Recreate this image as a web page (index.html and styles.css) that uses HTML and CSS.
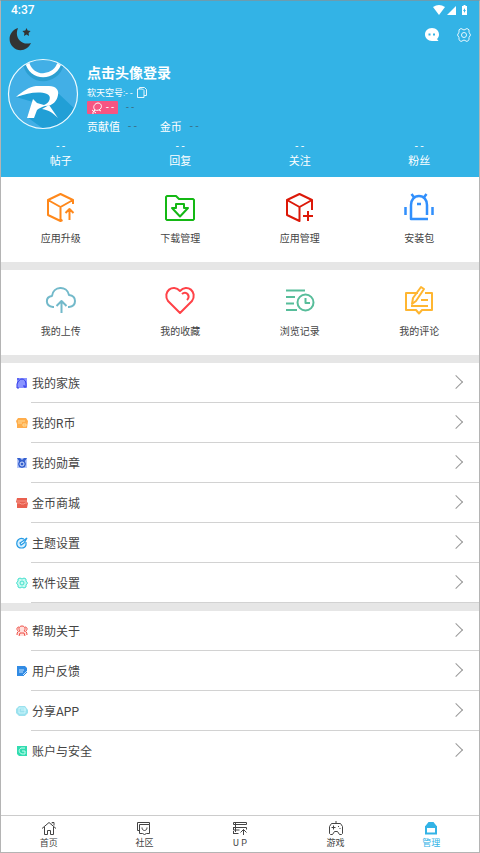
FILE: index.html
```html
<!DOCTYPE html>
<html lang="zh-CN">
<head>
<meta charset="utf-8">
<meta name="viewport" content="width=device-width, initial-scale=1">
<title>管理</title>
<link rel="stylesheet" href="styles.css">
</head>
<body>
<div class="app">
  <header class="header">
    <div class="status">
      <span>4:37</span>
      <svg width="36" height="12" viewBox="0 0 36 12" fill="#fff" aria-hidden="true">
        <path d="M0 3Q6-1 12 3L6 11Z"/><path d="M14 11H23V2Z"/>
        <path fill-rule="evenodd" d="M29 2h1.500V1h2v1H34v9h-5ZM32 4l-2 3h1v2l2-3h-1Z"/>
      </svg>
    </div>
    <div class="tools">
      <button class="icon-button" aria-label="夜间模式">
        <svg width="24" height="24" viewBox="0 0 24 24" fill="#333"><path d="M9 1C0 4-2 14 4 20s15 3 18-4C12 19 5 10 9 1Z"/><path d="m17.500 1 1.200 2.600 2.900.4-2 2 .4 3-2.500-1.400L15 9l.4-3-2-2 2.900-.4Z"/></svg>
      </button>
      <span class="tools-right">
        <button class="icon-button" aria-label="消息">
          <svg width="16" height="16" viewBox="0 0 16 16"><path d="M8 1C3.500 1 1 4 1 7.500S4 14 8 14h6.500L13 12c1.500-1.500 2-3 2-4.500C15 4 12.500 1 8 1Z" fill="#fff"/><path d="M4.500 6.500h2v2h-2zM9 6.500h2v2H9z" fill="#33b3e6"/></svg>
        </button>
        <button class="icon-button" aria-label="设置">
          <svg width="16" height="16" viewBox="0 0 16 16" fill="none" stroke="#e6f6fd"><path d="M5 1.500 8 3l3-1.500 2 1.300v2.400L14.500 8 13 10.500v2.300L11 14.500 8 13l-3 1.500-2-1.700v-2.300L1.500 8 3 5.200V2.800Z" stroke-linejoin="round"/><circle cx="8" cy="8" r="2.500"/></svg>
        </button>
      </span>
    </div>
    <div class="profile">
      <a class="avatar" href="#login" aria-label="登录">
        <svg width="72" height="72" viewBox="0 0 72 72">
          <defs><clipPath id="disc"><circle cx="36" cy="36" r="34"/></clipPath></defs>
          <g clip-path="url(#disc)">
            <circle cx="36" cy="36" r="35" fill="#42afe6"/>
            <path d="M9 39 41 29 52 36 71 54V72H38L20 59 26 44Z" fill="#219fd6"/>
            <path d="M19 6C23 25 49 25 54 6" fill="none" stroke="#2c9fd1" stroke-width="6"/>
            <path d="M20 3C23 22 49 22 53 3" fill="none" stroke="#fff" stroke-width="4"/>
          </g>
          <path d="M9 39C16 33 22 29 29 28h13c7 0 10 4 9 9-1 6-5 11-13 11-3 1-6 2-8 4l-3 8h-7l6-19 4 4 7 2c6-2 8-9 3-11-8-3-19-1-31 3Z" fill="#fff"/>
          <path d="M35 51 42 47 51 60C46 55 42 52 35 51Z" fill="#fff"/>
          <circle cx="36" cy="36" r="34.500" fill="none" stroke="#eefaff" stroke-width="1.200"/>
        </svg>
      </a>
      <div class="info">
        <h1>点击头像登录</h1>
        <div class="account"><span>软天空号:- -</span>
          <button class="icon-button" aria-label="复制"><svg width="12" height="12" viewBox="0 0 12 12" fill="none" stroke="#e6f6fd"><path d="M3.500 3V1.500h5l2 2v6H8M1.500 3h5L8 4.500v7H1.500Z"/></svg></button>
        </div>
        <div class="level"><span class="tag"><svg width="12" height="12" viewBox="0 0 12 12" fill="none" stroke="#fff"><path d="M4 8C1 5 4 1 7 1s4 3 3 5-4 3-6 2Zm0 0-2 2m-1-2 4 3M8 8l2 1M1 11h2"/></svg>- -</span><span class="dark">- -</span></div>
        <div class="points"><span>贡献值</span><span class="dark">- -</span><span class="coin">金币</span><span class="dark">- -</span></div>
      </div>
    </div>
    <div class="stats">
      <a href="#posts"><span>- -</span>帖子</a><a href="#replies"><span>- -</span>回复</a><a href="#following"><span>- -</span>关注</a><a href="#fans"><span>- -</span>粉丝</a>
    </div>
  </header>

  <main>
    <section class="grid">
      <a href="#upgrade"><svg class="tile orange" viewBox="0 0 32 32"><path d="M28 12V8L15.500 2 3 8v15l12.500 6 2-1M3 8l12.500 7L28 8M15.500 15v14M24.500 28V17m-4 4 4-4 4 4"/></svg>应用升级</a>
      <a href="#downloads"><svg class="tile green" viewBox="0 0 32 32"><path d="M3 4h9l3 3h14l1 1v19l-1 1H3l-1-1V5ZM12 12h8v4h4l-8 8.500L8 16h4Z"/></svg>下载管理</a>
      <a href="#apps"><svg class="tile red" viewBox="0 0 32 32"><path d="M28 18V8L15.500 2 3 8v15l12.500 6V15L3 8m12.500 7L28 8M19 24h10m-5-5v10"/></svg>应用管理</a>
      <a href="#packages"><svg class="tile blue" viewBox="0 0 32 32"><path d="M24 23V13c0-5-3-9-8-9s-8 4-8 9v14h17M8.500 2l3 4m12-4-3 4M2.500 15v8m27-8v8M14 12h4"/></svg>安装包</a>
    </section>
    <section class="grid">
      <a href="#uploads"><svg class="tile teal" viewBox="0 0 32 32"><path d="M9 22H8C0 21 0 12 7 11 8 1 22 0 24 10c8 1 8 11 0 12h-1M16.500 28V16m-5 5 5-5 5 5"/></svg>我的上传</a>
      <a href="#favorites"><svg class="tile pink" viewBox="0 0 32 32"><path d="M16 28 4 16C-2 7 9-2 16 6c7-8 18 1 12 10ZM18 9c4-4 9 2 5 6"/></svg>我的收藏</a>
      <a href="#history"><svg class="tile mint" viewBox="0 0 32 32"><path d="M2 5.500h19M2 12h9M2 18.500h8M2 25h11"/><circle cx="21.500" cy="17.500" r="8"/><path d="M21.500 13v5H26"/></svg>浏览记录</a>
      <a href="#comments"><svg class="tile yellow" viewBox="0 0 32 32"><path d="M15 8H3v17h10l3 3.500 3-3.500h10V8h-7M8 21h17M18 15h7M9 19l1-6 8-11 3 2-8 12Z"/></svg>我的评论</a>
    </section>
    <nav class="list" aria-label="我的">
      <a href="#family"><svg class="mark" viewBox="0 0 12 12"><path fill="#8a94ff" d="M1 1h10v10H1z"/><path d="M3 11H1V7c1-3 3-5 5-5s4 2 4 5v3H8V8M1 2h2" fill="none" stroke="#3039e8"/></svg><span>我的家族</span><i></i></a>
      <a href="#coins"><svg class="mark" viewBox="0 0 12 12"><path d="M2 1h8l2 3-1 7H1V7L0 4Z" fill="#ffad4b"/><path d="M2 4h7M2 6h4m4 1H7v2h3Z" fill="none" stroke="#ffdc9b"/></svg><span>我的R币</span><i></i></a>
      <a href="#medals"><svg class="mark" viewBox="0 0 12 12"><path fill="#b8c9fa" d="M1 1h10v10H1z"/><path fill="#345fce" d="M1 1h3l2 2 2-2h3L9 4l1 3-1 3-3 1-3-1-1-3 1-3Z"/><circle cx="6" cy="7" r="2" fill="#345fce" stroke="#d8e4ff"/></svg><span>我的勋章</span><i></i></a>
      <a href="#mall"><svg class="mark" viewBox="0 0 12 12"><path d="M1 1h10v4l1 1-1 5H1V6L0 5Z" fill="#e9604f"/><path d="M1 4h10M1 6h3l1 1h3l1-1h2" stroke="#ffb1a6" stroke-width=".7" fill="none"/></svg><span>金币商城</span><i></i></a>
      <a href="#theme"><svg class="mark" viewBox="0 0 12 12" fill="#d5efff" stroke="#269be4" stroke-width="1.200"><path d="M8 2C3 0 0 4 1 8s8 4 9 0V5M5 8 4 6l3-2 4-3-3 5Z"/></svg><span>主题设置</span><i></i></a>
      <a href="#settings"><svg class="mark" viewBox="0 0 12 12" fill="#c8fbf1" stroke="#43dfcd"><path d="m4 1 2 1 2-1 2 1v2l1.500 2L10 8v2l-2 1-2-1-2 1-2-1V8L.5 6 2 4V2Z"/><circle cx="6" cy="6" r="2"/></svg><span>软件设置</span><i></i></a>
    </nav>
    <nav class="list" aria-label="支持">
      <a href="#help"><svg class="mark" viewBox="0 0 12 12" fill="#ffe0dd" stroke="#ef4f46"><path d="M1 10c0-3 1-4 3-4-2-2-1-5 2-5s4 3 2 5c2 0 3 1 3 4M3 11l1-3h4l1 3M2 6C0 4 1 2 3 2m7 4c2-2 1-4-1-4"/></svg><span>帮助关于</span><i></i></a>
      <a href="#feedback"><svg class="mark" viewBox="0 0 12 12"><path d="M1 1h8l2 2v4l-4 4H1Z" fill="#318be4"/><path d="M3 5h5M3 7h4m0 3 4-4" stroke="#c5e2ff"/><path d="m7 11 4-4" stroke="#318be4"/></svg><span>用户反馈</span><i></i></a>
      <a href="#share"><svg class="mark" viewBox="0 0 12 12"><path d="M3 1h6l3 4v3l-3 3H3L0 8V4Z" fill="#9be1ee"/><path d="M3 3h6v5H3ZM5 5h5" fill="none" stroke="#d9fbff" stroke-width=".8"/></svg><span>分享APP</span><i></i></a>
      <a href="#security"><svg class="mark" viewBox="0 0 12 12"><path d="M1 1h10v10H3L1 9Z" fill="#32dcb0"/><path d="M9 3H5C2 5 3 8 6 9h3V6H6" fill="none" stroke="#c5fff0"/></svg><span>账户与安全</span><i></i></a>
    </nav>
  </main>

  <nav class="tabs" aria-label="主导航">
    <a href="#home"><svg viewBox="0 0 16 16"><path d="m1 8.500 7-6 7 6M3.500 7v7.500h3v-4h3v4h3V7M11 3.500v-1h2v3"/></svg>首页</a>
    <a href="#community"><svg viewBox="0 0 16 16"><path d="M3.500 10.500h-2v-8h12v2M3.500 4.500h10v9h-3l-2 1-2-1h-3ZM6 7.500c0 4 5 4 5 0"/></svg>社区</a>
    <a href="#up"><svg viewBox="0 0 16 16"><path d="M1.500 2.500h13v2h-13ZM1.500 7.500h13v2M1.500 7v3h6M1.500 13.500h5M1.500 11v3M11.500 15V9.500m-3 3 3-3 3 3M3.500 3v9"/></svg>U P</a>
    <a href="#games"><svg viewBox="0 0 16 16"><path d="M8 1v2.500M3.500 3.500h9l2 3v7l-1 1h-2l-2-3h-3l-2 3h-2l-1-1v-7ZM5.500 5.500v4M3.500 7.500h4M10 6.500h1M11.500 8.500h1"/></svg>游戏</a>
    <a class="active" href="#manage" aria-current="page"><svg viewBox="0 0 16 16"><path d="M3 7h10v6.500H3Z" stroke-width="2"/><path d="M5.500 2h5L14 6.500H2Z" fill="currentColor" stroke="none"/></svg>管理</a>
  </nav>
</div>
</body>
</html>
```
FILE: styles.css
```css
* { box-sizing: border-box; }
body {
  margin: 0;
  font-family: Roboto, "Noto Sans CJK SC", sans-serif;
  color: #444;
}
a { color: inherit; text-decoration: none; }
svg { display: block; flex: none; }
.app {
  display: flex;
  flex-direction: column;
  min-height: 100vh;
  border: 1px solid #b4b4b4;
  border-top-color: #6c9caf;
}
.header { background: #33b3e6; color: #fff; }
.status {
  display: flex;
  align-items: center;
  justify-content: space-between;
  height: 18px;
  padding: 0 10px;
  font-size: 12px;
  font-weight: 500;
}
.icon-button { padding: 0; border: 0; background: none; }
.tools {
  display: flex;
  align-items: flex-start;
  justify-content: space-between;
  height: 39px;
  padding: 8px 7px 0 8px;
}
.tools-right { display: flex; gap: 16px; }
.profile { display: flex; gap: 8px; padding: 0 6px; }
.info { padding-top: 5px; }
h1 { margin: 0; font-size: 14px; line-height: 20px; font-weight: 700; }
.account {
  display: flex;
  align-items: center;
  gap: 4px;
  height: 18px;
  font-size: 9px;
}
.level {
  display: flex;
  align-items: center;
  gap: 8px;
  height: 13px;
  font-size: 10px;
}
.tag {
  display: flex;
  align-items: center;
  gap: 3px;
  height: 13px;
  padding: 0 4px;
  background: #f75582;
  border-radius: 1px;
}
.dark { color: #3b6e84; }
.points {
  display: flex;
  align-items: center;
  gap: 8px;
  height: 24px;
  font-size: 11px;
}
.coin { margin-left: 15px; }
.stats {
  display: grid;
  grid-template-columns: repeat(4, 1fr);
  height: 39px;
  padding-top: 2px;
  font-size: 11px;
  line-height: 16px;
  text-align: center;
}
.stats span { display: block; line-height: 14px; }
main { flex: 1; }
.grid {
  display: grid;
  grid-template-columns: repeat(4, 1fr);
  padding: 15px 0;
  border-bottom: 8px solid #e6e6e6;
  font-size: 10px;
  line-height: 16px;
}
.grid a { display: flex; flex-direction: column; align-items: center; gap: 7px; }
.tile {
  width: 32px;
  height: 32px;
  fill: none;
  stroke: currentColor;
  stroke-width: 2;
  stroke-linejoin: round;
}
.orange { color: #ff881b; }
.green { color: #14b814; }
.red { color: #dc1808; }
.blue { color: #318ffc; stroke-width: 2.5; }
.teal { color: #72b9ca; }
.pink { color: #ff4248; }
.mint { color: #57bd9a; }
.yellow { color: #ffb631; }
.list + .list { border-top: 8px solid #e6e6e6; }
.list a {
  display: flex;
  align-items: center;
  height: 40px;
  padding-left: 15px;
}
.mark { width: 12px; height: 12px; margin-right: 3px; }
.list span {
  flex: 1;
  display: flex;
  align-items: center;
  height: 40px;
  padding-left: 1px;
  border-bottom: 1px solid #d2d2d2;
  font-size: 12px;
}
.list i {
  width: 28px;
  height: 40px;
  border-bottom: 1px solid #d2d2d2;
}
.list i::before {
  content: "";
  display: block;
  width: 9px;
  height: 9px;
  margin-top: 14px;
  border: solid #999;
  border-width: 1px 1px 0 0;
  transform: rotate(45deg);
}
.list:last-child a:last-child span,
.list:last-child a:last-child i { border-color: transparent; }
.tabs {
  display: grid;
  grid-template-columns: repeat(5, 1fr);
  height: 37px;
  padding-top: 4px;
  border-top: 1px solid #ccc;
  font-size: 9px;
  line-height: 14px;
}
.tabs a { display: flex; flex-direction: column; align-items: center; }
.tabs svg { width: 16px; height: 16px; fill: none; stroke: currentColor; }
.active { color: #33b3e6; }
```
